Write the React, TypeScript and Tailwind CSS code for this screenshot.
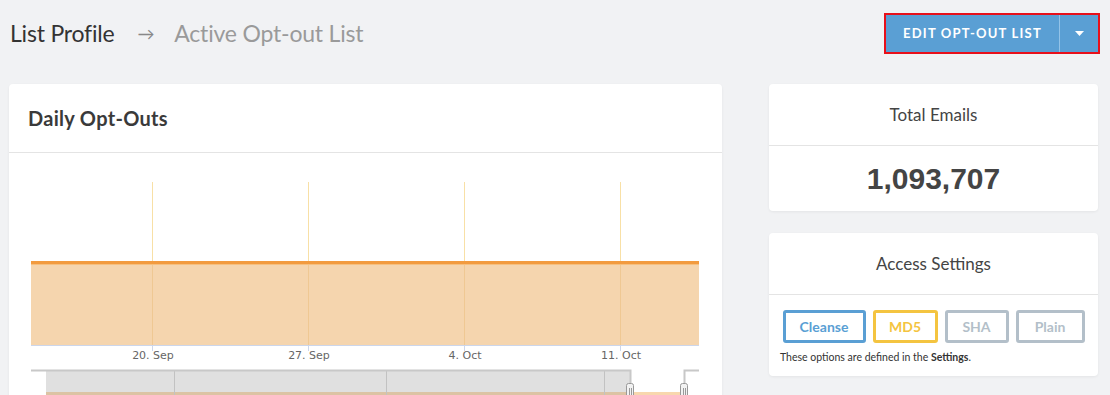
import React from "react";

const ticks = [
    {x: 143, label: "20. Sep"},
    {x: 299, label: "27. Sep"},
    {x: 455, label: "4. Oct"},
    {x: 611, label: "11. Oct"},
];

function OptOutChart() {
    return (
        <svg width="713" height="250" viewBox="0 0 713 250" className="block">
            {/* grid lines above the series */}
            {ticks.map(t => (
                <line key={"g" + t.x} x1={t.x + 0.5} x2={t.x + 0.5} y1={29} y2={110} stroke="#f8e0a6" strokeWidth={1}/>
            ))}
            {/* area series */}
            <rect x={22} y={110} width={668} height={82} fill="#f5d5ae"/>
            {ticks.map(t => (
                <line key={"f" + t.x} x1={t.x + 0.5} x2={t.x + 0.5} y1={110} y2={192} stroke="#efc893" strokeWidth={1}/>
            ))}
            <rect x={22} y={108} width={668} height={3} fill="#f29b3f"/>
            <rect x={22} y={111} width={668} height={1} fill="#f7c07f"/>
            {/* x axis */}
            <line x1={22} x2={690} y1={192.5} y2={192.5} stroke="#ccd6eb" strokeWidth={1}/>
            {ticks.map(t => (
                <g key={"t" + t.x}>
                    <line x1={t.x + 0.5} x2={t.x + 0.5} y1={192} y2={198} stroke="#ccd6eb" strokeWidth={1}/>
                    <text x={t.x + 1} y={206} textAnchor="middle" fontSize={11}
                          fontFamily="'DejaVu Sans', Verdana, sans-serif" fill="#666666">{t.label}</text>
                </g>
            ))}
            {/* navigator */}
            <rect x={37} y={218} width={584} height={40} fill="#e0e0e0"/>
            <rect x={37} y={239} width={584} height={20} fill="#dcc3a4"/>
            <rect x={621} y={239} width={54} height={20} fill="#f8d7ae"/>
            {[165, 377, 595].map(x => (
                <line key={"n" + x} x1={x + 0.5} x2={x + 0.5} y1={218} y2={250} stroke="#c2c2c2" strokeWidth={1}/>
            ))}
            <path d="M22 217.5 H621.5 V250 M675.5 250 V217.5 H690" fill="none" stroke="#c8c8c8" strokeWidth={2}/>
            {[621, 675].map(x => (
                <g key={"h" + x}>
                    <rect x={x - 3.5} y={230.5} width={7} height={16} rx={2} fill="#f2f2f2" stroke="#999999" strokeWidth={1}/>
                    <line x1={x - 0.5} x2={x - 0.5} y1={235} y2={244} stroke="#999999" strokeWidth={1}/>
                    <line x1={x + 1.5} x2={x + 1.5} y1={235} y2={244} stroke="#999999" strokeWidth={1}/>
                </g>
            ))}
        </svg>
    );
}

function Badge({label, color, width}: {label: string; color: string; width: string}) {
    return (
        <div className={`flex h-[33px] items-center justify-center rounded-[3px] border-[3px] text-[14px] font-bold ${color} ${width}`}>
            {label}
        </div>
    );
}

export default function App() {
    return (
        <div className="min-h-screen bg-[#f1f2f4] font-['Lato','Open_Sans',sans-serif] text-[#444]">
            <div className="flex h-[84px] items-start justify-between pl-[10px] pr-[10px] pt-[13px]">
                <div className="flex h-[41px] items-center text-[23px] tracking-[-0.2px]">
                    <span className="text-[#333]">List Profile</span>
                    <span className="ml-[23px] mr-[20px] text-[17px] text-[#888]">→</span>
                    <span className="text-[#9a9a9a]">Active Opt-out List</span>
                </div>
                <div className="flex h-[41px] w-[216px] border-2 border-[#e8101a] bg-[#5a9fd4] text-white">
                    <div className="flex flex-1 items-center justify-center text-[13px] font-bold tracking-[1.2px]">
                        EDIT OPT-OUT LIST
                    </div>
                    <div className="w-px bg-[#93c3e8]"/>
                    <div className="flex w-[38px] items-center justify-center">
                        <svg width="9" height="5" viewBox="0 0 9 5"><polygon points="0,0 9,0 4.5,5" fill="#ffffff"/></svg>
                    </div>
                </div>
            </div>

            <div className="flex gap-[47px] pl-[9px] pr-[12px]">
                <div className="w-[713px] rounded-[4px] bg-white shadow-[0_1px_3px_rgba(0,0,0,0.06)]">
                    <div className="flex h-[69px] items-center border-b border-[#e4e4e4] px-[19px]">
                        <h2 className="text-[20px] font-bold tracking-[0.3px] text-[#3a3a3a]">Daily Opt-Outs</h2>
                    </div>
                    <OptOutChart/>
                </div>

                <div className="flex w-[329px] flex-col gap-[22px]">
                    <div className="rounded-[4px] bg-white shadow-[0_1px_3px_rgba(0,0,0,0.06)]">
                        <div className="flex h-[62px] items-center justify-center border-b border-[#e4e4e4] text-[17px] text-[#444]">
                            Total Emails
                        </div>
                        <div className="flex h-[65px] items-center justify-center font-['Liberation_Sans',Arial,sans-serif] text-[30px] font-bold text-[#444]">
                            1,093,707
                        </div>
                    </div>

                    <div className="rounded-[4px] bg-white shadow-[0_1px_3px_rgba(0,0,0,0.06)]">
                        <div className="flex h-[62px] items-center justify-center border-b border-[#e4e4e4] text-[17px] text-[#444]">
                            Access Settings
                        </div>
                        <div className="px-[11px] pb-[10px] pt-[15px]">
                            <div className="flex justify-center gap-[7px]">
                                <Badge label="Cleanse" color="border-[#5a9fd4] text-[#5a9fd4]" width="w-[83px]"/>
                                <Badge label="MD5" color="border-[#f4c440] text-[#f4c440]" width="w-[65px]"/>
                                <Badge label="SHA" color="border-[#b3bfc9] text-[#b3bfc9]" width="w-[64px]"/>
                                <Badge label="Plain" color="border-[#b3bfc9] text-[#b3bfc9]" width="w-[69px]"/>
                            </div>
                            <p className="mt-[7px] text-[10.5px] text-[#333]">
                                These options are defined in the <b>Settings</b>.
                            </p>
                        </div>
                    </div>
                </div>
            </div>
        </div>
    );
}
